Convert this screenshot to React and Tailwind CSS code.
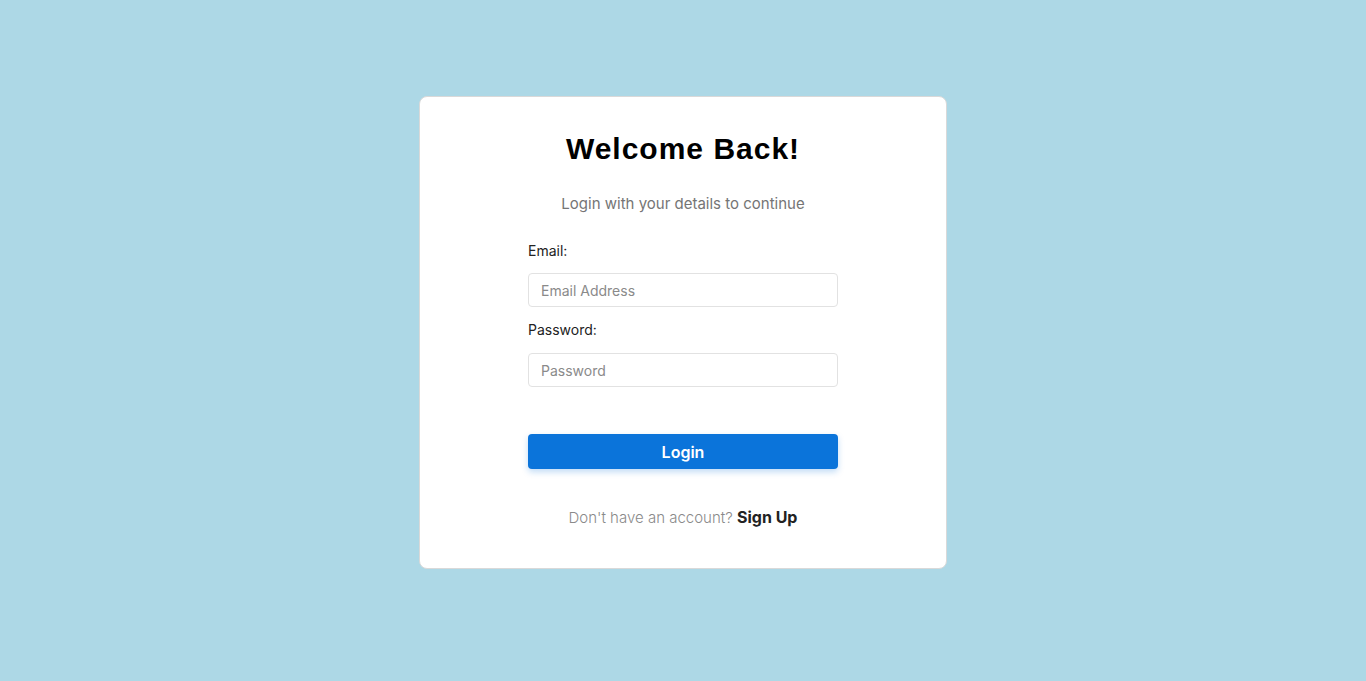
import React from 'react';

const App = () => {
    return (
        <div className="min-h-screen w-full bg-[#add8e6] pt-[96px] font-['Inter',sans-serif]">
            <div className="mx-auto w-[528px] bg-white border border-[#d9d9d9] rounded-lg pt-[34px] pb-[38px] px-[108px]">
                <h1 className="text-center text-[30px] leading-[36px] font-bold tracking-[1px] text-black font-['Liberation_Sans',Arial,sans-serif]">
                    Welcome Back!
                </h1>
                <p className="mt-[26px] text-center text-[15px] leading-[22px] text-[#757575]">
                    Login with your details to continue
                </p>

                <form className="mt-[26px]" onSubmit={(e) => e.preventDefault()}>
                    <label className="block text-[14px] leading-[20px] text-[#222]">Email:</label>
                    <input
                        type="email"
                        placeholder="Email Address"
                        className="mt-[12px] block w-full h-[34px] px-[12px] text-[14px] border border-[#e2e2e2] rounded-[4px] placeholder-[#8a8a8a] focus:outline-none"
                    />
                    <label className="mt-[13px] block text-[14px] leading-[20px] text-[#222]">Password:</label>
                    <input
                        type="password"
                        placeholder="Password"
                        className="mt-[13px] block w-full h-[34px] px-[12px] text-[14px] border border-[#e2e2e2] rounded-[4px] placeholder-[#8a8a8a] focus:outline-none"
                    />
                    <button
                        type="submit"
                        className="mt-[47px] block w-full h-[35px] bg-[#0b74da] text-white text-[16px] font-semibold rounded-[4px] shadow-[0_3px_6px_rgba(11,116,218,0.25)]"
                    >
                        Login
                    </button>
                </form>

                <p className="mt-[36px] text-center text-[15px] leading-[24px] text-[#8a8a8a] font-light">
                    Don't have an account? <a href="#" className="text-[16px] font-bold text-[#222]">Sign Up</a>
                </p>
            </div>
        </div>
    );
};

export default App;
